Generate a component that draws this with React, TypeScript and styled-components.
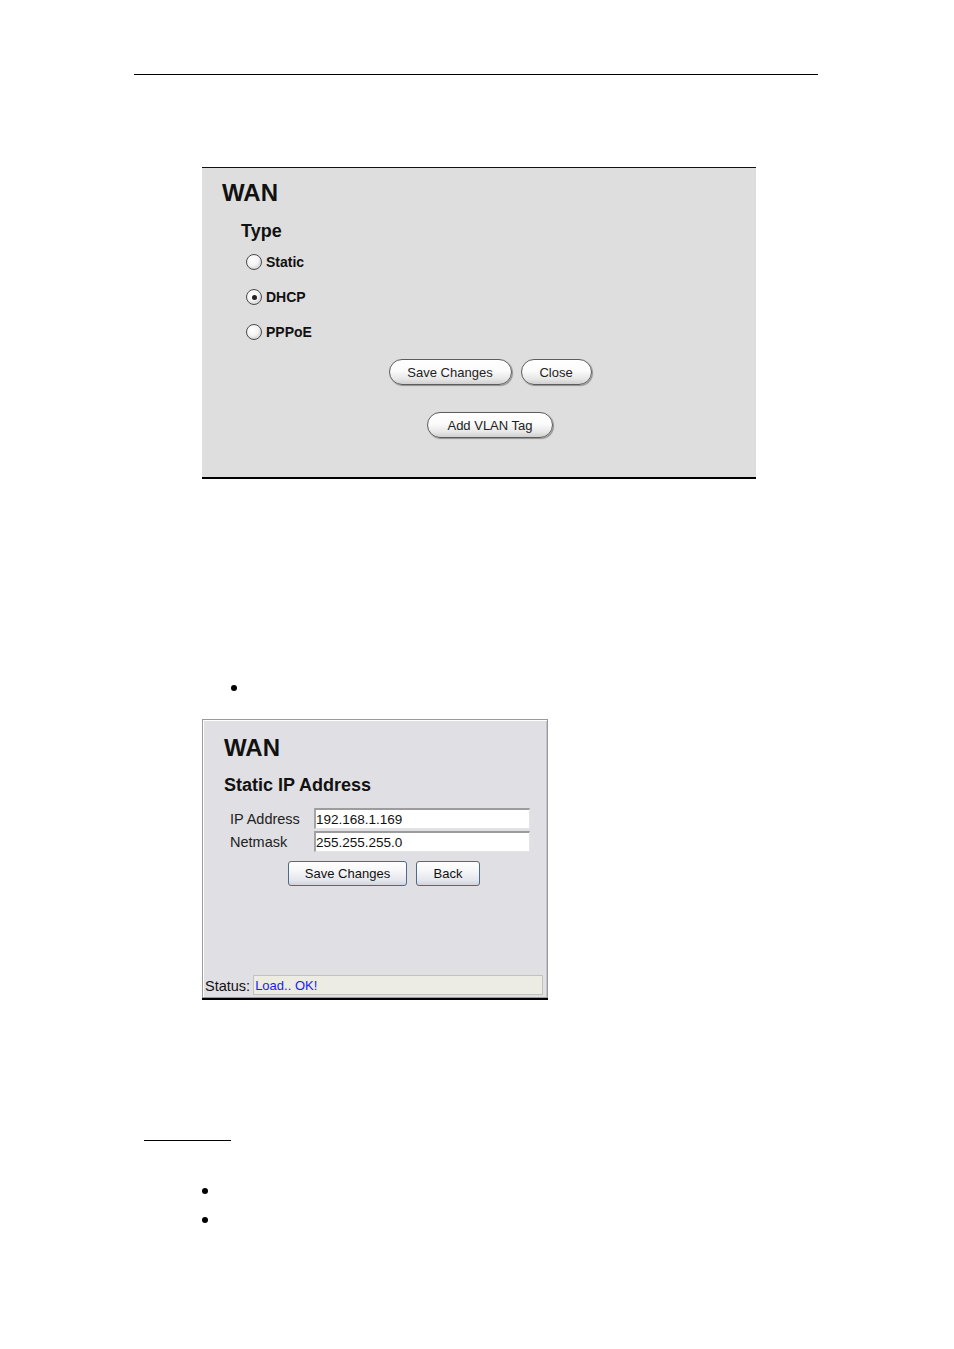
import React from "react";
import styled, { createGlobalStyle } from "styled-components";

const GlobalStyle = createGlobalStyle`
  html, body {
    margin: 0;
    padding: 0;
    background: #ffffff;
  }
  body {
    font-family: "Liberation Sans", Arial, sans-serif;
    color: #000;
  }
`;

const Page = styled.div`
  width: 954px;
  height: 1349px;
  overflow: hidden;
  display: flex;
  flex-direction: column;
`;

const HeaderRule = styled.div`
  margin: 74px 0 0 134px;
  width: 684px;
  height: 1px;
  background: #000;
`;

const Figure = styled.div<{ $top: number; $width: number }>`
  margin: ${(p) => p.$top}px 0 0 202px;
  width: ${(p) => p.$width}px;
  display: flex;
  flex-direction: column;
`;

const BottomBar = styled.div<{ $gap?: number }>`
  margin-top: ${(p) => p.$gap ?? 0}px;
  height: 2px;
  background: #000;
`;

/* ---------- first dialog ---------- */

const TypePanel = styled.div`
  height: 310px;
  box-sizing: border-box;
  border-top: 1px solid #111;
  background: #dedede;
  padding: 11px 0 0 20px;
  display: flex;
  flex-direction: column;
`;

const Title = styled.h1`
  margin: 0;
  font-family: "Liberation Sans", Arial, sans-serif;
  font-size: 24px;
  line-height: 28px;
  font-weight: 700;
  color: #111;
`;

const SubTitle = styled.h2<{ $indent?: number; $top?: number }>`
  margin: ${(p) => p.$top ?? 12}px 0 0 ${(p) => p.$indent ?? 0}px;
  font-family: "Liberation Sans", Arial, sans-serif;
  font-size: 18px;
  line-height: 22px;
  font-weight: 700;
  color: #111;
`;

const RadioList = styled.div`
  margin: 10px 0 0 24px;
  display: flex;
  flex-direction: column;
  gap: 15px;
`;

const RadioRow = styled.label`
  height: 20px;
  display: flex;
  align-items: center;
  gap: 4px;
  font-size: 14px;
  font-weight: 700;
  color: #111;
`;

const RadioDot = styled.span<{ $checked?: boolean }>`
  width: 14px;
  height: 14px;
  border-radius: 50%;
  border: 1px solid #4a4a4a;
  background: radial-gradient(circle at 40% 35%, #ffffff 0%, #f4f4f4 45%, #bdbdbd 100%);
  display: flex;
  align-items: center;
  justify-content: center;
  flex-shrink: 0;
  &::after {
    content: "";
    width: 5px;
    height: 5px;
    border-radius: 50%;
    background: ${(p) => (p.$checked ? "#222" : "transparent")};
  }
`;

const PillRow = styled.div<{ $top: number }>`
  margin-top: ${(p) => p.$top}px;
  display: flex;
  justify-content: center;
  gap: 9px;
  padding-left: 2px;
`;

const PillButton = styled.button<{ $w: number }>`
  width: ${(p) => p.$w}px;
  height: 26px;
  border: 1px solid #5c5c5c;
  border-radius: 13px;
  background: linear-gradient(#ffffff 0%, #fbfbfb 45%, #e6e6e6 80%, #cfcfcf 100%);
  box-shadow: 1px 1px 1px rgba(0, 0, 0, 0.35);
  font-family: "Liberation Sans", Arial, sans-serif;
  font-size: 13px;
  color: #222;
  padding: 1px 0 0;
  cursor: pointer;
`;

/* ---------- bullets ---------- */

const BulletRow = styled.div<{ $top: number; $left: number }>`
  margin: ${(p) => p.$top}px 0 0 ${(p) => p.$left}px;
  height: 10px;
  display: flex;
  align-items: center;
`;

const Dot = styled.span`
  width: 6px;
  height: 6px;
  border-radius: 50%;
  background: #000;
`;

const ShortRule = styled.div`
  margin: 140px 0 0 144px;
  width: 87px;
  height: 1px;
  background: #000;
`;

/* ---------- second dialog ---------- */

const StaticPanel = styled.div`
  height: 279px;
  box-sizing: border-box;
  border: 1px solid #9a9a9e;
  box-shadow: inset 1px 1px 0 #ffffff, inset -1px 0 0 #c4c4c8;
  background: #e0dfe3;
  display: flex;
  flex-direction: column;
`;

const PanelBody = styled.div`
  padding: 14px 0 0 21px;
  display: flex;
  flex-direction: column;
`;

const FieldGrid = styled.div`
  margin: 12px 0 0 6px;
  display: grid;
  grid-template-columns: 84px 216px;
  row-gap: 2px;
  align-items: center;
`;

const FieldLabel = styled.span`
  font-size: 14.5px;
  color: #222;
`;

const TextInput = styled.input`
  height: 21px;
  box-sizing: border-box;
  border: 1px solid #e4e4e4;
  border-top: 2px solid #9c9c9c;
  border-left: 2px solid #a4a4a4;
  background: #fff;
  padding: 0;
  font-family: "Liberation Sans", Arial, sans-serif;
  font-size: 13.5px;
  color: #111;
  outline: none;
`;

const XpRow = styled.div`
  margin: 9px 0 0 64px;
  display: flex;
  gap: 9px;
`;

const XpButton = styled.button<{ $w: number }>`
  width: ${(p) => p.$w}px;
  height: 25px;
  border: 1px solid #4d6a8c;
  border-radius: 3px;
  background: linear-gradient(#ffffff 0%, #f6f6f8 40%, #e4e6ec 80%, #cfd4de 100%);
  font-family: "Liberation Sans", Arial, sans-serif;
  font-size: 13px;
  color: #111;
  padding: 0;
  cursor: pointer;
`;

const StatusRow = styled.div`
  margin-top: auto;
  padding: 0 4px 2px 2px;
  display: flex;
  align-items: flex-end;
  gap: 3px;
`;

const StatusLabel = styled.span`
  font-size: 14.5px;
  line-height: 18px;
  color: #111;
`;

const StatusField = styled.div`
  flex: 1;
  height: 20px;
  box-sizing: border-box;
  border: 1px solid #c2c2bc;
  background: #ecebe4;
  padding-left: 1px;
  font-size: 13px;
  line-height: 19px;
  color: #1a1aff;
`;

const App = (): JSX.Element => {
  const types = [
    { label: "Static", checked: false },
    { label: "DHCP", checked: true },
    { label: "PPPoE", checked: false },
  ];

  return (
    <>
      <GlobalStyle />
      <Page>
        <HeaderRule />

        <Figure $top={92} $width={554}>
          <TypePanel>
            <Title>WAN</Title>
            <SubTitle $indent={19} $top={13}>
              Type
            </SubTitle>
            <RadioList>
              {types.map((t) => (
                <RadioRow key={t.label}>
                  <RadioDot $checked={t.checked} />
                  {t.label}
                </RadioRow>
              ))}
            </RadioList>
            <PillRow $top={17}>
              <PillButton $w={123}>Save Changes</PillButton>
              <PillButton $w={71}>Close</PillButton>
            </PillRow>
            <PillRow $top={27}>
              <PillButton $w={126}>Add VLAN Tag</PillButton>
            </PillRow>
          </TypePanel>
          <BottomBar $gap={0} />
        </Figure>

        <BulletRow $top={204} $left={231}>
          <Dot />
        </BulletRow>

        <Figure $top={26} $width={346}>
          <StaticPanel>
            <PanelBody>
              <Title>WAN</Title>
              <SubTitle>Static IP Address</SubTitle>
              <FieldGrid>
                <FieldLabel>IP Address</FieldLabel>
                <TextInput defaultValue="192.168.1.169" />
                <FieldLabel>Netmask</FieldLabel>
                <TextInput defaultValue="255.255.255.0" />
              </FieldGrid>
              <XpRow>
                <XpButton $w={119}>Save Changes</XpButton>
                <XpButton $w={64}>Back</XpButton>
              </XpRow>
            </PanelBody>
            <StatusRow>
              <StatusLabel>Status:</StatusLabel>
              <StatusField>Load.. OK!</StatusField>
            </StatusRow>
          </StaticPanel>
          <BottomBar $gap={0} />
        </Figure>

        <ShortRule />

        <BulletRow $top={45} $left={202}>
          <Dot />
        </BulletRow>
        <BulletRow $top={19} $left={202}>
          <Dot />
        </BulletRow>
      </Page>
    </>
  );
};

export default App;
